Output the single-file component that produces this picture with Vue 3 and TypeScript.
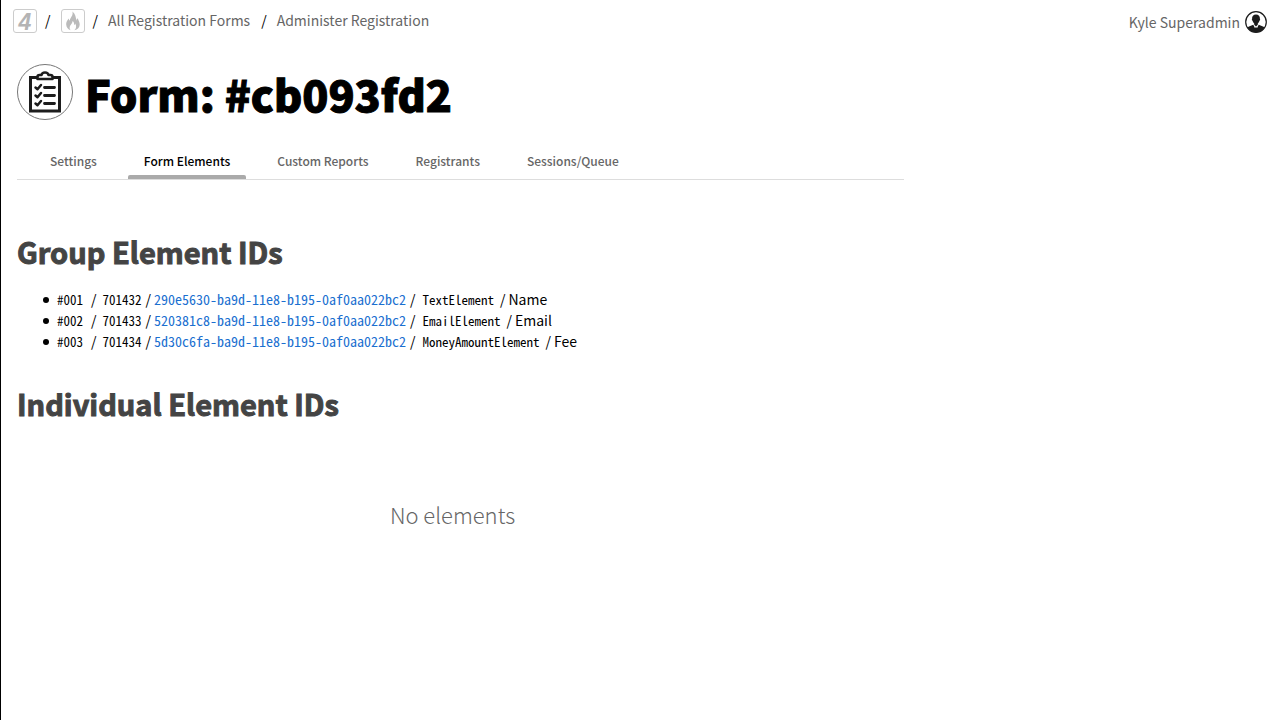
<script setup lang="ts">
import { ref } from 'vue'

interface FormElement {
  num: string
  id: string
  uuid: string
  kind: string
  label: string
}

const tabs: string[] = ['Settings', 'Form Elements', 'Custom Reports', 'Registrants', 'Sessions/Queue']
const activeTab = ref('Form Elements')

const groupElements: FormElement[] = [
  { num: '#001', id: '701432', uuid: '290e5630-ba9d-11e8-b195-0af0aa022bc2', kind: 'TextElement', label: 'Name' },
  { num: '#002', id: '701433', uuid: '520381c8-ba9d-11e8-b195-0af0aa022bc2', kind: 'EmailElement', label: 'Email' },
  { num: '#003', id: '701434', uuid: '5d30c6fa-ba9d-11e8-b195-0af0aa022bc2', kind: 'MoneyAmountElement', label: 'Fee' },
]
</script>

<template>
  <div class="page">
    <header class="topbar">
      <nav class="crumbs" aria-label="Breadcrumb">
        <a class="tile four" href="#">4</a>
        <span class="slash">/</span>
        <a class="tile" href="#" aria-label="Camp">
          <svg viewBox="0 0 22 22" width="22" height="22" aria-hidden="true">
            <path fill="#bbb" d="M10.500 1.500c.6 3-.6 4.600-1.800 6.400-.6.900-.9 1.800-.7 2.900-.8-.5-1.200-1.300-1.200-2.300C5 10.400 4 12.500 4.200 14.800c.3 2.700 2 4.700 4.500 5.500-1.300-1.400-1.400-3.200-.4-4.800.9-1.400 2.200-2.500 2.300-4.500 1.300 1 1.700 2.500 1.500 3.900.6-.3 1-.8 1.100-1.500 1.400 2.300 1.300 5-.8 6.900 3.300-.8 5.300-2.900 5.300-5.800 0-2.600-1.300-4-2-6.200-.8.600-1.200 1.400-1.200 2.400C13.800 7.500 13.500 4 10.500 1.500z" />
          </svg>
        </a>
        <span class="slash">/</span>
        <a class="crumb" href="#">All Registration Forms</a>
        <span class="slash">/</span>
        <a class="crumb" href="#">Administer Registration</a>
      </nav>
      <a class="user" href="#">
        <span>Kyle Superadmin</span>
        <svg viewBox="0 0 22 22" width="22" height="22" aria-hidden="true">
          <circle cx="11" cy="11" r="10.300" fill="#fff" stroke="#1c1c1c" stroke-width="1.200" />
          <path fill="#1c1c1c" d="M11 3.500c-2.600 0-4.100 1.800-3.900 4.300-.5.500-.2 1.600.4 2 .3 1.200.9 2.100 1.700 2.800v1.200l1.800 1.800 1.800-1.800v-1.200c.8-.7 1.400-1.600 1.700-2.800.6-.4.900-1.500.4-2C15.100 5.300 13.600 3.500 11 3.500z" />
          <path fill="#1c1c1c" d="M8.300 13.800 4 15.400c-.8.300-1.200.8-1.300 1.600A10.200 10.200 0 0 0 19.300 17c-.1-.8-.5-1.300-1.300-1.600l-4.300-1.600L12 17.300l-.6-1h-.8l-.6 1z" />
        </svg>
      </a>
    </header>

    <main class="content">
      <div class="title">
        <span class="badge">
          <svg viewBox="0 0 56 56" width="56" height="56" fill="none" stroke="#1c1c1c" aria-hidden="true">
            <circle cx="28" cy="28" r="27.500" stroke="#777" stroke-width="1" />
            <path d="M13.500 13.500h29v33.500h-29z" stroke-width="3" />
            <path d="M20.500 15v-2q0-2 2-2h2q.5-2.500 3.500-2.500t3.500 2.500h2q2 0 2 2v2z" fill="#fff" stroke-width="2.600" stroke-linejoin="round" />
            <path d="M27.500 23.500h10M27.500 31.500h10M27.500 39.500h10" stroke-width="2.800" stroke-linecap="round" />
            <path d="m18.500 23.500 2 1.700 3.500-4.200m-5.500 10.500 2 1.700 3.500-4.200m-5.500 10.500 2 1.700 3.500-4.200" stroke-width="2.500" stroke-linecap="round" stroke-linejoin="round" />
          </svg>
        </span>
        <h1>Form: #cb093fd2</h1>
      </div>

      <nav class="tabs" aria-label="Form sections">
        <button
          v-for="tab in tabs"
          :key="tab"
          type="button"
          class="tab"
          :class="{ active: tab === activeTab }"
          @click="activeTab = tab"
        >{{ tab }}</button>
      </nav>

      <h2>Group Element IDs</h2>
      <ul class="elements">
        <li v-for="el in groupElements" :key="el.id">
          <code>{{ el.num }}</code>
          <span class="sep wide">/</span>
          <code>{{ el.id }}</code>
          <span class="sep">/</span>
          <a class="uuid" href="#">{{ el.uuid }}</a>
          <span class="sep even">/</span>
          <code>{{ el.kind }}</code>
          <span class="sep last">/</span>
          <span>{{ el.label }}</span>
        </li>
      </ul>

      <h2>Individual Element IDs</h2>
      <p class="empty">No elements</p>
    </main>
  </div>
</template>

<style>
body {
  margin: 0;
  background: #fff;
}
</style>

<style scoped>
.page {
  box-sizing: border-box;
  min-height: 100vh;
  border-left: 1px solid #000;
  font-family: "Noto Sans CJK JP", "Noto Sans", sans-serif;
  font-size: 14px;
  line-height: 21px;
  color: #000;
}
a {
  color: #666;
  text-decoration: none;
}
.topbar {
  display: flex;
  justify-content: space-between;
  padding: 8px 13px 0 12px;
}
.crumbs,
.user {
  display: flex;
  align-items: center;
  height: 26px;
}
.tile {
  display: flex;
  justify-content: center;
  width: 22px;
  height: 22px;
  border: 1px solid #ccc;
  border-radius: 3px;
}
.four {
  color: #b4b4b4;
  font-family: "Liberation Sans", sans-serif;
  font-size: 23px;
  line-height: 24px;
  font-weight: 700;
  font-style: italic;
}
.slash,
.crumb {
  padding-bottom: 2px;
}
.slash {
  padding-left: 8px;
  padding-right: 10px;
}
.crumb {
  padding-right: 3px;
}
.user {
  gap: 5px;
  height: 28px;
}
.content {
  max-width: 887px;
  padding: 28px 16px 0;
}
.title {
  display: flex;
  gap: 12px;
}
.badge svg {
  display: block;
}
h1 {
  margin: 0;
  font-size: 43px;
  line-height: 58px;
  font-weight: 900;
  -webkit-text-stroke: 1px #000;
}
.tabs {
  display: flex;
  margin-top: 22px;
  padding-left: 17px;
  gap: 15px;
  border-bottom: 1px solid #ddd;
}
.tab {
  height: 35px;
  padding: 2px 16px 0;
  border: 0;
  background: none;
  color: #666;
  font-family: inherit;
  font-size: 12px;
  font-weight: 500;
  display: flex;
  flex-direction: column;
  justify-content: space-between;
  line-height: 29px;
}
.tab::after {
  content: "";
  align-self: stretch;
  height: 4px;
  margin: 0 -16px;
  border-radius: 2px 2px 0 0;
}
.tab.active {
  color: #000;
}
.tab.active::after {
  background: #aaa;
}
h2 {
  margin: 48px 0 15px;
  color: #444;
  font-size: 29px;
  line-height: 46px;
  font-weight: 700;
  -webkit-text-stroke: 1px #444;
}
.elements {
  margin: 0;
  padding-left: 26px;
  list-style: none;
}
.elements li::before {
  content: "";
  display: inline-block;
  width: 6px;
  height: 6px;
  margin-right: 8px;
  border-radius: 50%;
  background: #000;
  vertical-align: 2px;
}
.sep {
  margin: 0 3px 0 4px;
}
.wide {
  margin: 0 6px 0 8px;
}
.even {
  margin: 0 7px 0 4px;
}
.last {
  margin-left: 6px;
}
code,
.uuid {
  font-family: "Noto Sans Mono CJK JP", "Liberation Mono", monospace;
  font-size: 13px;
}
.uuid {
  color: #1a6fd0;
  font-size: 14px;
}
.elements + h2 {
  margin-top: 28px;
}
.empty {
  margin: 72px 0 0;
  padding-right: 16px;
  text-align: center;
  color: #666;
  font-size: 22px;
  line-height: 32px;
  font-weight: 300;
}
</style>
